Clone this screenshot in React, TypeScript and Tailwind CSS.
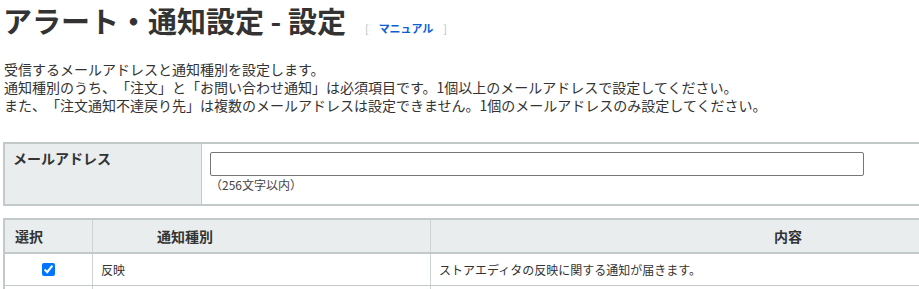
const FONT = "font-['Noto_Sans_CJK_JP','Noto_Sans',sans-serif]";

interface NoticeRow {
  id: string;
  name: string;
  description: string;
  checked: boolean;
}

const rows: NoticeRow[] = [
  { id: 'reflect', name: '反映', description: 'ストアエディタの反映に関する通知が届きます。', checked: true },
  { id: 'order', name: '注文', description: '注文に関する通知が届きます。', checked: true },
];

export default function App() {
  return (
    <div className={`${FONT} [text-spacing-trim:space-all] w-full min-h-screen overflow-hidden bg-white px-[3px] pt-[2px] text-[#333333]`}>
      {/* Title */}
      <div className="flex items-baseline">
        <h1 className="text-[29px] font-bold leading-[36px] text-[#333333]">アラート・通知設定 - 設定</h1>
        <span className="ml-[19px] text-[11px] leading-[14px]">
          <span className="text-[#b4bcc4]">[</span>
          <a href="#" className="mx-[10px] font-bold text-[#0b5fd6]">マニュアル</a>
          <span className="text-[#b4bcc4]">]</span>
        </span>
      </div>

      {/* Description */}
      <div className="mt-[22px] pl-[1px] text-[14px] leading-[18px]">
        <p>受信するメールアドレスと通知種別を設定します。</p>
        <p>通知種別のうち、「注文」と「お問い合わせ通知」は必須項目です。1個以上のメールアドレスで設定してください。</p>
        <p>また、「注文通知不達戻り先」は複数のメールアドレスは設定できません。1個のメールアドレスのみ設定してください。</p>
      </div>

      {/* Mail address */}
      <div className="mt-[28px] flex w-[1144px] border-2 border-[#c3c8c8]">
        <div className="w-[197px] shrink-0 border-r border-[#c3c8c8] bg-[#e9eded] pl-[8px] pt-[5px] text-[14px] font-bold leading-[18px]">
          メールアドレス
        </div>
        <div className="flex-1 pl-[8px] pt-[8px] pb-[11px]">
          <input
            type="text"
            className="block h-[24px] w-[654px] rounded-[2px] border border-[#767676] bg-white px-1 text-[13px] outline-none"
          />
          <p className="mt-[1px] text-[12px] leading-[16px] text-[#444444]">（256文字以内）</p>
        </div>
      </div>

      {/* Notice types */}
      <div className="mt-[12px] w-[1144px] border-2 border-b-0 border-[#c3c8c8]">
        <div className="flex h-[34px] border-b-2 border-[#c3c8c8] bg-[#e9eded] text-[14px] font-bold">
          <div className="flex w-[88px] shrink-0 items-center border-r border-[#cdd2d2] pl-[10px]">選択</div>
          <div className="flex w-[338px] shrink-0 items-center border-r border-[#cdd2d2] pl-[64px]">通知種別</div>
          <div className="flex flex-1 items-center justify-center">内容</div>
        </div>

        {rows.map((row) => (
          <div key={row.id} className="flex h-[32px] border-b border-[#c3c8c8] text-[12px]">
            <div className="flex w-[88px] shrink-0 items-center justify-center border-r border-[#cdd2d2]">
              <input type="checkbox" defaultChecked={row.checked} className="m-0 h-[13px] w-[13px]" />
            </div>
            <div className="flex w-[338px] shrink-0 items-center border-r border-[#cdd2d2] pl-[8px]">{row.name}</div>
            <div className="flex flex-1 items-center pl-[8px]">{row.description}</div>
          </div>
        ))}
      </div>
    </div>
  );
}
